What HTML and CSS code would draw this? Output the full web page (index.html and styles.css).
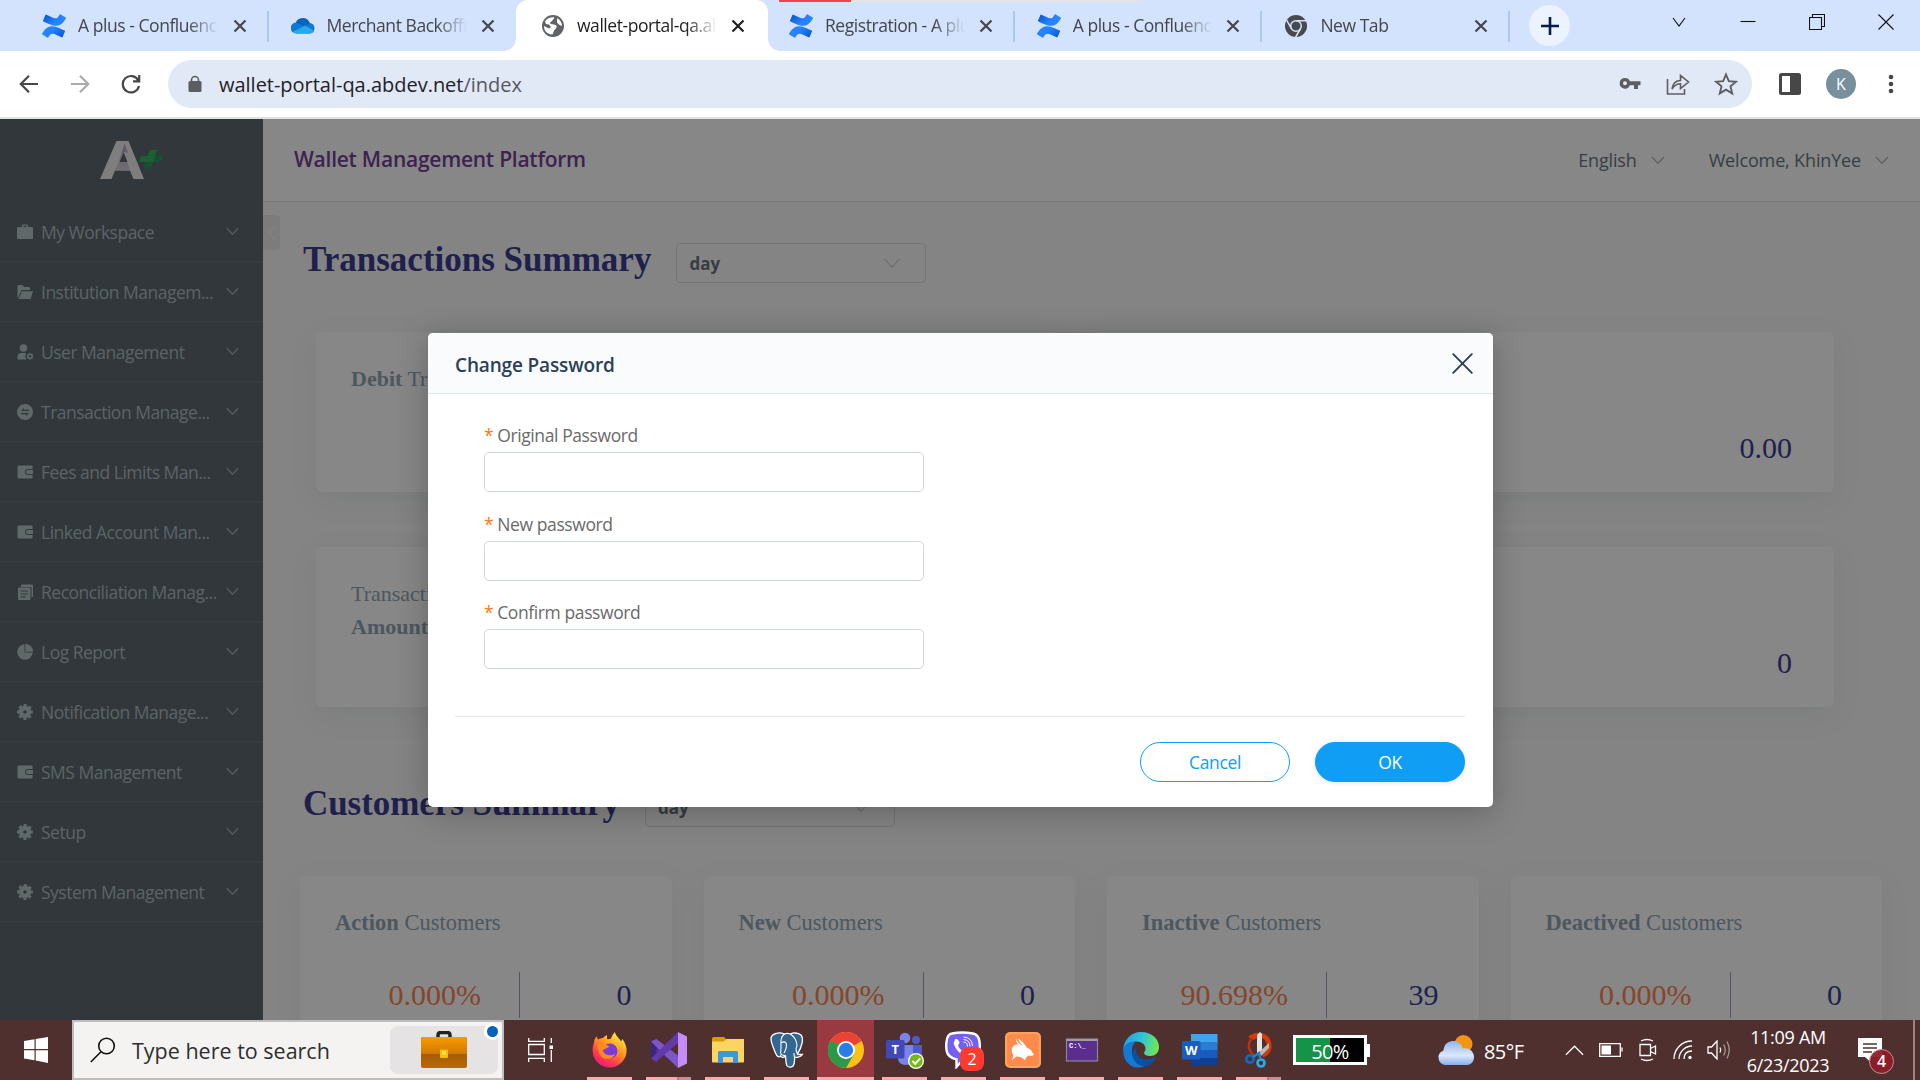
FILE: index.html
```html
<!DOCTYPE html>
<html lang="en">
<head>
<meta charset="utf-8">
<title>Wallet Management Platform</title>
<link rel="stylesheet" href="styles.css">
</head>
<body>
<svg class="defs" width="0" height="0" aria-hidden="true">
  <defs>
    <linearGradient id="cfa" x1="0" y1="0" x2="1" y2=".6"><stop offset="0" stop-color="#0052cc"/><stop offset=".7" stop-color="#2684ff"/></linearGradient>
    <linearGradient id="cfb" x1="1" y1="1" x2="0" y2=".4"><stop offset="0" stop-color="#0052cc"/><stop offset=".7" stop-color="#2684ff"/></linearGradient>
    <linearGradient id="ff" x1=".8" y1="0" x2=".2" y2="1"><stop offset="0" stop-color="#fff44f"/><stop offset=".4" stop-color="#ff9a1e"/><stop offset=".75" stop-color="#ff3750"/><stop offset="1" stop-color="#e31587"/></linearGradient>
    <linearGradient id="edge" x1="0" y1=".3" x2="1" y2=".5"><stop offset="0" stop-color="#249ede"/><stop offset=".5" stop-color="#31c3d6"/><stop offset="1" stop-color="#70e94f"/></linearGradient>
    <linearGradient id="case" x1="0" y1="0" x2="0" y2="1"><stop offset="0" stop-color="#fa9a00"/><stop offset="1" stop-color="#cf7a00"/></linearGradient>
    <linearGradient id="caseb" x1="0" y1="0" x2="0" y2="1"><stop offset="0" stop-color="#8f4a00"/><stop offset="1" stop-color="#b96a08"/></linearGradient>
    <linearGradient id="cloud" x1="0" y1="0" x2="0" y2="1"><stop offset="0" stop-color="#8fb4f0"/><stop offset=".6" stop-color="#dce8fb"/><stop offset="1" stop-color="#88acea"/></linearGradient>
    <linearGradient id="logoA" x1=".6" y1="0" x2=".4" y2="1"><stop offset="0" stop-color="#b3a3bb"/><stop offset="1" stop-color="#d8cfdd"/></linearGradient>
    <symbol id="i-conf" viewBox="0 0 24 24"><path fill="url(#cfb)" d="M.87 18.257c-.248.382-.53.875-.763 1.245a.764.764 0 0 0 .255 1.040l4.965 3.054a.764.764 0 0 0 1.058-.26c.199-.332.454-.763.733-1.221 1.967-3.247 3.945-2.853 7.508-1.146l4.957 2.337a.764.764 0 0 0 1.028-.382l2.364-5.346a.764.764 0 0 0-.382-1 599.851 599.851 0 0 1-4.965-2.361C10.911 10.970 5.224 11.185.87 18.257z"/><path fill="url(#cfa)" d="M23.131 5.743c.249-.405.531-.875.764-1.250a.764.764 0 0 0-.256-1.034L18.675.404a.764.764 0 0 0-1.058.26c-.195.335-.451.763-.734 1.225-1.966 3.246-3.945 2.850-7.508 1.146L4.437.694a.764.764 0 0 0-1.027.382L1.046 6.422a.764.764 0 0 0 .382 1c1.039.49 3.105 1.467 4.965 2.361 6.698 3.246 12.392 3.029 16.738-4.040z"/></symbol>
    <symbol id="i-x" viewBox="0 0 14 14"><path d="M1.500 1.500l11 11M12.500 1.500l-11 11" stroke="currentColor" stroke-width="2.200" fill="none"/></symbol>
    <symbol id="i-down" viewBox="0 0 14 9"><path d="M1 1l6 6.500L13 1" stroke="currentColor" stroke-width="1.200" fill="none"/></symbol>
    <symbol id="i-wallet" viewBox="0 0 16 16"><path d="M1.500 1.500h13q1 0 1 1V5H11a3 3 0 0 0 0 6h4.500v2.500q0 1-1 1h-13q-1 0-1-1v-11q0-1 1-1Z" fill="currentColor"/><path d="M11 5.900h5v4.200h-5a2.100 2.100 0 0 1 0-4.200Z" fill="currentColor"/></symbol>
    <symbol id="i-gear" viewBox="0 0 16 16"><circle cx="8" cy="8" r="4" fill="none" stroke="currentColor" stroke-width="4.400"/><circle cx="8" cy="8" r="6.800" fill="none" stroke="currentColor" stroke-width="2.300" stroke-dasharray="3.140 2.200" stroke-dashoffset="1.570"/></symbol>
  </defs>
</svg>

<header class="tabs">
  <div class="load"><span class="load-done"></span></div>
  <div class="tab first"><svg class="fav"><use href="#i-conf"/></svg><span class="tab-name">A plus - Confluence</span><svg class="tab-x"><use href="#i-x"/></svg></div>
  <div class="tab last"><svg class="fav" viewBox="0 0 24 24"><path d="M5.500 19.500a5.500 5.500 0 0 1-.5-11A7.500 7.500 0 0 1 18.700 9 5.300 5.300 0 0 1 19 19.500Z" fill="#0f78d4"/><path d="M5 8.500A7.500 7.500 0 0 1 18.700 9l-5 3.500Z" fill="#0a63b8"/><path d="M2 17.800 14 11.500l9 5.300a5 5 0 0 1-4 2.700H5.500A5 5 0 0 1 2 17.800Z" fill="#28a8ea"/></svg><span class="tab-name">Merchant Backoffice</span><svg class="tab-x"><use href="#i-x"/></svg></div>
  <div class="tab active"><svg class="fav" viewBox="0 0 24 24"><circle cx="12" cy="12" r="11" fill="#5f6368"/><path d="M4 7.500C6 4 9 3 13 3.200c1 2-2 2-1.500 3.600L9 8.500c-.3 2 3.500 1.500 5.500 2.500 2.500 1.200.5 3.500-.5 4.500-1.500 1.300-1.500 3-2.500 5C6 20.500 3 16.500 3 12l5 2.500 2-1.500-2-2.500-3-.5Z" fill="#fff"/><path d="M16 4.300c3 1.500 5 4.200 5 7.700l-2.500-1L16 8.500Z" fill="#fff"/></svg><span class="tab-name">wallet-portal-qa.abdev</span><svg class="tab-x"><use href="#i-x"/></svg></div>
  <div class="tab"><svg class="fav"><use href="#i-conf"/></svg><span class="tab-name">Registration - A plus</span><svg class="tab-x"><use href="#i-x"/></svg></div>
  <div class="tab"><svg class="fav"><use href="#i-conf"/></svg><span class="tab-name">A plus - Confluence</span><svg class="tab-x"><use href="#i-x"/></svg></div>
  <div class="tab"><svg class="fav" viewBox="0 0 24 24"><circle cx="12" cy="12" r="11" fill="#474a4d"/><circle cx="12" cy="12" r="5.300" fill="none" stroke="#d3e2fd" stroke-width="1.500"/><path d="M12 6.700h10M7.400 14.600 2.600 6.200M16.600 14.600 11.600 23" stroke="#d3e2fd" stroke-width="1.500"/></svg><span class="tab-name">New Tab</span><svg class="tab-x"><use href="#i-x"/></svg></div>
  <div class="plus"><svg width="18" height="18" viewBox="0 0 18 18"><path d="M9 0v18M0 9h18" stroke="#041e49" stroke-width="2.600"/></svg></div>
  <div class="win">
    <svg viewBox="0 0 16 16"><path d="M2 4l6 8 6-8"/></svg>
    <svg viewBox="0 0 16 16"><path d="M.5 7.500h15"/></svg>
    <svg viewBox="0 0 16 16"><path d="M.5 3.500h12v12h-12zM3.500 3.500v-3h12v12h-3"/></svg>
    <svg viewBox="0 0 16 16"><path d="M.5.5l15 15M15.500.5l-15 15"/></svg>
  </div>
</header>

<div class="toolbar">
  <div class="nav">
    <svg viewBox="0 0 20 20"><path d="M19 10H2M10 1.800 1.800 10l8.200 8.200"/></svg>
    <svg class="off" viewBox="0 0 20 20"><path d="M1 10h17M10 1.800l8.200 8.200-8.200 8.200"/></svg>
    <svg viewBox="0 0 20 20"><path d="M17.300 6.500A8.200 8.200 0 1 0 18 12M18.200 1v6.300H12"/></svg>
  </div>
  <div class="omni">
    <svg class="lock" width="14" height="18" viewBox="0 0 14 18"><rect x=".5" y="6" width="13" height="11" rx="1.500" fill="#5a5d61"/><path d="M3.500 7V5a3.500 3.500 0 0 1 7 0v2" fill="none" stroke="#5a5d61" stroke-width="1.600"/></svg>
    <span class="url">wallet-portal-qa.abdev.net<span class="path">/index</span></span>
    <svg class="oi" viewBox="0 0 24 24"><path d="M7 6a5.300 5.300 0 1 0 4.900 7.300H16V17h4v-3.700h2.500V9.200H11.900A5.300 5.300 0 0 0 7 6Zm0 3.300a2 2 0 1 1 0 4 2 2 0 0 1 0-4Z" fill="#5c5e61" fill-rule="evenodd"/></svg>
    <svg class="oi" viewBox="0 0 24 24"><path d="M1.500 7v15h17v-5M6 17c1-6 4-8.500 8.500-8.500v-5L22.500 10l-8 6.500v-4.700C11 11.800 8.500 13 6 17Z" fill="none" stroke="#5c5e61" stroke-width="1.600"/></svg>
    <svg class="oi" viewBox="0 0 24 24"><path d="M12 2.500l2.800 6.600 7.200.6-5.500 4.700 1.700 7-6.200-3.800-6.200 3.800 1.700-7L2 9.700l7.200-.6Z" fill="none" stroke="#5c5e61" stroke-width="1.900"/></svg>
  </div>
  <svg class="panel" width="22" height="22" viewBox="0 0 22 22"><rect width="22" height="22" rx="2.500" fill="#474747"/><rect x="3" y="3" width="8" height="16" fill="#fff"/></svg>
  <span class="avatar">K</span>
  <svg class="dots" width="6" height="20" viewBox="0 0 6 20"><circle cx="3" cy="3" r="2.300"/><circle cx="3" cy="10" r="2.300"/><circle cx="3" cy="17" r="2.300"/></svg>
</div>

<main class="app">
  <aside class="side">
    <div class="logo"><svg width="64" height="40" viewBox="0 0 64 40"><path d="M0 39 16.500 1h12L44 39H33.500L30 30.500H15L11.500 39ZM19 22h8.500l-4-10.500Z" fill="#f0eff0" fill-rule="evenodd"/><path d="M24.500 3.500 28 13l-4-1-4.500 10H27l3 8.500H15L19 21Z" fill="url(#logoA)"/><path d="M50 10h7l-2 6h8l-2.500 6H53l-2 6.500h-7l2-6.500h-7l2-6h7Z" fill="#2c9a62"/><path d="M50 10h7l-2 6-2 6H39l2-6h7Z" fill="#36b85a"/></svg></div>
    <nav class="menu">
      <div class="item"><svg class="mi" viewBox="0 0 16 16"><path d="M5 3V1.500Q5 .5 6 .5h4q1 0 1 1V3h4q1 0 1 1v10q0 1-1 1H1q-1 0-1-1V4q0-1 1-1Zm1.400-1.200V3h3.200V1.800Z" fill="currentColor" fill-rule="evenodd"/></svg><span class="label">My Workspace</span><svg class="md"><use href="#i-down"/></svg></div>
      <div class="item"><svg class="mi" viewBox="0 0 16 16"><path d="M.5 14V2q0-1 1-1h4l1.500 2h5q1 0 1 1v2H4.500L2 12ZM5 7.200h11L13.700 15H1.500Z" fill="currentColor"/></svg><span class="label">Institution Managem...</span><svg class="md"><use href="#i-down"/></svg></div>
      <div class="item"><svg class="mi" viewBox="0 0 16 16"><circle cx="6.500" cy="4" r="3.800" fill="currentColor"/><path d="M.5 15.500V13q0-4 4-4h4.800q-1.800 3 .2 6.500Z" fill="currentColor"/><circle cx="13" cy="12.300" r="2.100" fill="none" stroke="currentColor" stroke-width="1.600"/><path d="M13 8.800v1.500M13 14.300v1.500M10 10.500l1.300.8M14.700 13.300l1.300.7M16 10.500l-1.300.8M11.300 13.300 10 14" stroke="currentColor"/></svg><span class="label">User Management</span><svg class="md"><use href="#i-down"/></svg></div>
      <div class="item"><svg class="mi" viewBox="0 0 16 16"><path d="M8 0a8 8 0 1 0 0 16A8 8 0 0 0 8 0ZM4 6.900 7 4v1.800h5v1.300Zm8 2.200L9 12v-1.800H4V9Z" fill="currentColor" fill-rule="evenodd"/></svg><span class="label">Transaction Manage...</span><svg class="md"><use href="#i-down"/></svg></div>
      <div class="item"><svg class="mi"><use href="#i-wallet"/></svg><span class="label">Fees and Limits Man...</span><svg class="md"><use href="#i-down"/></svg></div>
      <div class="item"><svg class="mi"><use href="#i-wallet"/></svg><span class="label">Linked Account Man...</span><svg class="md"><use href="#i-down"/></svg></div>
      <div class="item"><svg class="mi" viewBox="0 0 16 16"><path d="M5 .5h10q1 0 1 1V13h-1.500V3H4V1.500Q4 .5 5 .5Z" fill="currentColor"/><path d="M2 3.500h10.500q1 0 1 1V15q0 1-1 1H2q-1 0-1-1V4.500q0-1 1-1ZM3.500 6.500v1H11v-1Zm0 3v1H11v-1Zm0 3v1H9v-1Z" fill="currentColor" fill-rule="evenodd"/></svg><span class="label">Reconciliation Manag...</span><svg class="md"><use href="#i-down"/></svg></div>
      <div class="item"><svg class="mi" viewBox="0 0 16 16"><path d="M7.500.2V8.500h8.300A7.800 7.800 0 1 1 7.500.2Z" fill="currentColor"/><path d="M8.300 0A7.500 7.500 0 0 1 16 7.700H8.300Z" fill="currentColor"/></svg><span class="label">Log Report</span><svg class="md"><use href="#i-down"/></svg></div>
      <div class="item"><svg class="mi"><use href="#i-gear"/></svg><span class="label">Notification Manage...</span><svg class="md"><use href="#i-down"/></svg></div>
      <div class="item"><svg class="mi"><use href="#i-wallet"/></svg><span class="label">SMS Management</span><svg class="md"><use href="#i-down"/></svg></div>
      <div class="item"><svg class="mi"><use href="#i-gear"/></svg><span class="label">Setup</span><svg class="md"><use href="#i-down"/></svg></div>
      <div class="item"><svg class="mi"><use href="#i-gear"/></svg><span class="label">System Management</span><svg class="md"><use href="#i-down"/></svg></div>
    </nav>
  </aside>
  <section class="body">
    <div class="top">
      <h1 class="brand">Wallet Management Platform</h1>
      <span class="drop lang">English</span><svg class="td"><use href="#i-down"/></svg>
      <span class="drop user">Welcome, KhinYee</span><svg class="td"><use href="#i-down"/></svg>
    </div>
    <div class="content">
      <div class="fold"><svg width="9" height="15" viewBox="0 0 9 15"><path d="M8 1 1.500 7.500 8 14" fill="none" stroke="#fff" stroke-width="1"/></svg></div>
      <div class="head"><h2>Transactions Summary</h2><div class="select"><b>day</b><svg class="sd"><use href="#i-down"/></svg></div></div>
      <div class="wide">
        <div class="card"><p><b>Debit</b> Transactions</p></div>
        <div class="card"><span class="num">0.00</span></div>
        <div class="card"><p>Transactions<br><b>Amount</b></p></div>
        <div class="card"><span class="num">0</span></div>
      </div>
      <div class="head second"><h2>Customers Summary</h2><div class="select"><b>day</b><svg class="sd"><use href="#i-down"/></svg></div></div>
      <div class="quad">
        <div class="stat"><p><b>Action</b> Customers</p><div class="vals"><span class="pct">0.000%</span><span class="cnt">0</span></div></div>
        <div class="stat"><p><b>New</b> Customers</p><div class="vals"><span class="pct">0.000%</span><span class="cnt">0</span></div></div>
        <div class="stat"><p><b>Inactive</b> Customers</p><div class="vals"><span class="pct">90.698%</span><span class="cnt">39</span></div></div>
        <div class="stat"><p><b>Deactived</b> Customers</p><div class="vals"><span class="pct">0.000%</span><span class="cnt">0</span></div></div>
      </div>
    </div>
  </section>
  <div class="mask">
    <form class="modal">
      <div class="m-head"><span class="m-title">Change Password</span><svg width="21" height="21" viewBox="0 0 21 21"><path d="M1.200 1.200l18.600 18.600M19.800 1.200 1.200 19.800" stroke="#2b4058" stroke-width="1.900" stroke-linecap="round"/></svg></div>
      <div class="m-body">
        <label><span class="lb"><i>*</i>Original Password</span><input type="password"></label>
        <label><span class="lb"><i>*</i>New password</span><input type="password"></label>
        <label><span class="lb"><i>*</i>Confirm password</span><input type="password"></label>
      </div>
      <div class="m-foot"><button type="button" class="btn">Cancel</button><button type="button" class="btn ok">OK</button></div>
    </form>
  </div>
</main>

<footer class="bar">
  <div class="start"><svg width="24" height="26" viewBox="0 0 24 26"><path d="M0 4l10.500-1.800V12H0ZM11.700 2 24 0v12H11.700ZM0 13.200h10.500v10L0 21.500ZM11.700 13.200H24V26l-12.300-2.400Z" fill="#fff"/></svg></div>
  <div class="search">
    <svg width="26" height="26" viewBox="0 0 26 26"><circle cx="16.500" cy="9" r="7.800" fill="none" stroke="#111" stroke-width="1.600"/><path d="M11 14.800.800 25" stroke="#111" stroke-width="1.600"/></svg>
    <span class="hint">Type here to search</span>
    <div class="promo"><svg width="46" height="38" viewBox="0 0 46 38"><path d="M17 7V4q0-2.500 2.500-2.500h7Q29 1.500 29 4v3" fill="none" stroke="#222" stroke-width="3.500"/><rect y="6" width="46" height="31" rx="2" fill="url(#caseb)"/><path d="M0 23V8q0-2 2-2h42q2 0 2 2v15Z" fill="url(#case)"/><rect x="19" y="18.500" width="8" height="8.500" rx="1" fill="#f2c200"/><rect x="21" y="20" width="4" height="3.500" fill="#ffe45c"/></svg><i class="dot"></i></div>
  </div>
  <div class="view"><svg width="25" height="24" viewBox="0 0 25 24"><path d="M.7 0v3.300h15.600V0M.7 6.500h15.600v10H.7zM.7 24v-3.700h15.600V24M23.300 0v5M23.300 12v12" fill="none" stroke="#fff" stroke-width="1.300"/><rect x="21.500" y="7.500" width="3.500" height="3.500" fill="#fff"/></svg></div>
  <div class="apps">
    <div class="ap"><svg viewBox="0 0 36 36"><path d="M2 11c0-3 1-5 2.500-6.500L6 7.500q2-1.500 5-1.500c1-1.500 3-2.500 4-3L15 7q2 .5 4-.5c1-3 2.500-5 4-6.500.5 4 4 5.500 6 9.500L30.500 7c3 4.500 4.500 8 4 13.500A17 17 0 0 1 .7 20C.4 16 1 13.500 2 11Z" fill="url(#ff)"/><circle cx="18" cy="19" r="7.500" fill="#7b3bd6"/><path d="M5 12c4-1 8-.5 12 2.500-1 2-5 2-6 4 1 5 8 6 12 3.500-2 6-12 7-15.500.5Z" fill="#ff8a1c"/></svg></div>
    <div class="ap dual"><svg viewBox="0 0 36 36"><path d="M0 9.500 5.500 7 27 32l0 4L9 20 5.500 31 0 26Z" fill="#52349a"/><path d="M0 9.500v17l5.500-4.700v-7.600Z" fill="#3d2680"/><path d="M5.500 7 27 23.500V36L0 9.500Z" fill="#7f56c8"/><path d="M27 0v11L5.500 29.500 0 26.500Z" fill="#643aa8"/><path d="M27 0l9 4.500v27L27 36Z" fill="#c48df5"/></svg></div>
    <div class="ap"><svg viewBox="0 0 36 36"><path d="M2 6.500Q2 5 3.500 5H14l3 3v3H2Z" fill="#d79a0b"/><path d="M2 9.500h11.500l3-2.500H34v22.500q0 1-1 1H3q-1 0-1-1Z" fill="#fcd462"/><path d="M8 31V20.500q0-1.500 1.500-1.500h17q1.500 0 1.500 1.500V31h-5v-6h-10v6Z" fill="#3a96dd"/></svg></div>
    <div class="ap"><svg viewBox="0 0 36 36"><path d="M7 1.500c3-1.200 6-.5 8.500.5 2-1 4-.8 6 0C24 .5 29 .5 32 3c3 3.500 1 11.500-3.500 19 1.500 1 3.500.3 5 .3-1.500 2.700-5 3.300-8 3 .2 3 .3 6.500-1.500 8.700-1.500 1.500-5 1.500-6.200-.5C16.500 30 17 27 16.500 24c-2 2-4 1.500-5 0-1 1.500-3.500 1-5-3C3.500 14 1.500 9 2 6c.7-2.700 2.500-4 5-4.500Z" fill="#336791" stroke="#fff" stroke-width="1.300"/><path d="M15.500 2c-4 3-4 7-3.500 11 .3 3-.5 6-.3 8 0 1 1 2.500 4.500 2.500M21.500 2c4 3 6.500 8 6.500 12-1.500 2-1 5 .5 8M12 11c2-1.500 4-1.500 5 0s.5 6-2 10M25.500 25c-.5-1.500-.7-2.500-.5-4" fill="none" stroke="#fff" stroke-width="1.100"/></svg></div>
    <div class="ap now"><svg viewBox="0 0 36 36"><circle cx="18" cy="18" r="18" fill="#fbc116"/><path d="M18 18 2.400 9A18 18 0 0 1 33.600 9Z" fill="#ea4335"/><path d="M2.400 9A18 18 0 0 0 18 36l7.800-13.500L18 18Z" fill="#2a9a48"/><path d="M2.400 9l7.900 13.500L14 12Z" fill="#2a9a48"/><path d="M2.400 9 10 12h8V9l4-8L10 2Z" fill="#ea4335"/><circle cx="18" cy="18" r="9" fill="#fff"/><circle cx="18" cy="18" r="7.200" fill="#2a7de8"/></svg></div>
    <div class="ap"><svg class="teams" viewBox="0 0 38 38"><circle cx="19" cy="7" r="5.300" fill="#7b83eb"/><circle cx="30" cy="9" r="4" fill="#5059c9"/><path d="M24 14h12v11q0 5-6 6h-6Z" fill="#5059c9"/><path d="M13 14h14v13q0 7-7 7-8 0-8-7Z" fill="#7b83eb"/><rect y="9" width="18.500" height="18.500" rx="1.500" fill="#4149b4"/><text x="9.300" y="22.500" text-anchor="middle" class="glyph">T</text><circle cx="30" cy="30" r="8" fill="#fff"/><circle cx="30" cy="30" r="6.700" fill="#77b916"/><path d="M26.500 30l2.700 2.800 5-5.500" fill="none" stroke="#fff" stroke-width="2"/></svg></div>
    <div class="ap"><svg class="viber" viewBox="0 0 38 38"><path d="M7 2.500Q17 .5 28 2.500c4.500 1 6 4 6.500 8q.7 6 0 11c-1 5.500-5 7-12 7.500l-5 .3-6 6.500v-7.500C5.500 27 2.500 24.500 1.700 20q-1-5.500 0-10.500C2.300 5.500 4 3 7 2.500Z" fill="#7360f2" stroke="#fff" stroke-width="2.400"/><path d="M10 8.500c2-1.500 4 1 4.500 3 0 1.500-2 2-1 4 1 2.500 3 4 5 4.500 1.500 0 1.500-2 3-1.500 2 .7 4 2.500 3 4-2 3-5 2.500-8 .5-4-2.500-7-7-7.800-11Z" fill="#fff"/><path d="M18.500 11q4 0 4 4.500M18.500 8.500q6.500.5 6.500 7M18.500 6Q27 6.500 27.500 15" fill="none" stroke="#fff"/></svg><span class="vb">2</span></div>
    <div class="ap"><svg viewBox="0 0 36 36"><rect width="36" height="36" rx="5" fill="#f9a35c"/><rect x="2" y="2" width="32" height="32" rx="4" fill="#ff8a4c"/><path d="M11 6c.5 3.500 3.500 6 7 8C15 10.500 13.500 8.500 13 6.500c4 2.500 7 5.500 9 9.500 2.500.5 4.500 2 5 4l2 2.500c-1 1.500-3.500 1.500-5 1-2 .8-3.500 2.500-4 5-2-2.500-5-4-8.500-4l-4.500 3.500c1-2.500 1.500-4 1-5.500C6 19 6.500 15.500 9 13.500c1.500-1.200 3-1.300 4.500-.8C11.500 10.500 10.500 8.500 11 6Z" fill="#fff"/></svg></div>
    <div class="ap"><svg viewBox="0 0 36 36"><rect x="2.500" y="7" width="31" height="22" fill="#5b2d90" stroke="#8c8790" stroke-width="1.200"/><path d="M2.500 7h31v2h-31Z" fill="#a09aa6"/><text x="5" y="16" class="cmd">C:\_</text></svg></div>
    <div class="ap"><svg viewBox="0 0 36 36"><path d="M.2 19C0 8 8 0 18 0c11 0 18 7 18 15 0 6-4 9-9 9-4 0-6-1.500-6-3 0-1.200 1.500-1.500 1.500-4.500 0-4-4-7-9-7-7 0-12 4-13.300 9.500Z" fill="url(#edge)"/><path d="M.2 19C1 12 7 9 13 9.500c-4 3-4 7-4 10 0 8 6 14 13 14.500C10 39 .5 31 .2 19Z" fill="#1279d4"/><path d="M13.500 15C11 23 18 29 27 27q3-.6 5.500-2c.8-.3 1 .3.500 1-3 5-7 8-11 8.500C10 33 6 21 13.500 15Z" fill="#0b4fa0"/></svg></div>
    <div class="ap"><svg viewBox="0 0 36 36"><path d="M9 2h26.500v9H9Z" fill="#41a5ee"/><path d="M9 10h26.500v8H9Z" fill="#2b7cd3"/><path d="M9 18h26.500v8H9Z" fill="#185abd"/><path d="M9 26h26.500v8H9Z" fill="#103f91"/><rect x="0" y="9" width="18.500" height="18.500" rx="1.500" fill="#1a5dbe"/><text x="9.200" y="23" text-anchor="middle" class="glyph">W</text></svg></div>
    <div class="ap dual"><svg viewBox="0 0 36 36"><path d="M7 5C12-1 27-2 30 10c2 9-3 14-8 15l-2-4c5-1 7-7 5-11C23 5 17 4 13 8Z" fill="#d83b01"/><path d="M10 7c-4 6-2 12 3 17" fill="none" stroke="#b8330a" stroke-width="2.500"/><path d="M16 3l3-3 2 2v21h-5Z" fill="#e3e3e3"/><path d="M18 20l10-9v5l-8 8Z" fill="#b9b9b9"/><circle cx="9" cy="27" r="3.700" fill="none" stroke="#0f6cbd" stroke-width="2.700"/><circle cx="20" cy="31" r="3.500" fill="none" stroke="#28a8ea" stroke-width="2.700"/><path d="M12 25l6-4 1.500 6" fill="none" stroke="#1b83d0" stroke-width="2.500"/></svg></div>
  </div>
  <div class="charge"><span>50%</span></div>
  <div class="weather"><svg width="38" height="32" viewBox="0 0 38 32"><circle cx="26.500" cy="10" r="9" fill="#f39412"/><path d="M8 31a7.500 7.500 0 0 1-1.500-14.500C7 10 11.500 6.500 17 7s8 4 8.500 7.500C32 13 37 17.500 37 23s-3.500 8-8 8Z" fill="url(#cloud)"/></svg><span>85°F</span></div>
  <div class="tray">
    <svg class="t1" viewBox="0 0 20 12"><path d="M1 11l9-9 9 9"/></svg>
    <svg class="t2" viewBox="0 0 24 16"><path d="M.7 1.700h20.600v12.600H.7zM23 5.500v4"/><rect x="2.500" y="3.500" width="9.500" height="9" fill="#fff" stroke="none"/></svg>
    <svg class="t3" viewBox="0 0 18 24"><path d="M1 6.500h10.500v11H1zM11.500 10.500 16.500 8v8l-5-2.500M2 3q6-3 12 0M2 21q6 3 12 0"/></svg>
    <svg class="t4" viewBox="0 0 20 20"><path d="M1 19C1 9 9 1 19 1M6 19C6 12 12 6 19 6M11 19c0-5 3-8 8-8"/><circle cx="17" cy="17.500" r="1.700" fill="#fff" stroke="none"/></svg>
    <svg class="t5" viewBox="0 0 24 20"><path d="M1 7h3.500L10 1v18l-5.500-6H1Z"/><path d="M13 7.500q1.500 2.500 0 5"/><path d="M16.500 4.500q3.500 5.500 0 11M20 1.500q4.500 8.500 0 17" opacity=".5"/></svg>
  </div>
  <div class="clock"><span>11:09 AM</span><span>6/23/2023</span></div>
  <div class="note"><svg width="24" height="25" viewBox="0 0 24 25"><path d="M0 0h24v19H13v5.500L7 19H0Z" fill="#fff"/><path d="M5 6h14M5 10h14M5 14h9" stroke="#4f302f" stroke-width="1.300"/></svg><span class="nb">4</span></div>
</footer>
</body>
</html>
```
FILE: styles.css
```css
* { box-sizing: border-box; }
body { margin: 0; width: 1920px; height: 1080px; overflow: hidden; display: flex; flex-direction: column; font-family: "Open Sans", "Noto Sans", sans-serif; background: #fff; }
h1, h2, p { margin: 0; }
svg { flex: none; display: block; }
.defs { position: absolute; }

.tabs { position: relative; height: 51px; flex: none; display: flex; padding-left: 19px; background: #d3e2fd; }
.load { position: absolute; left: 779px; top: 0; width: 362px; height: 2px; background: #e3e3e6; }
.load-done { display: block; width: 72px; height: 2px; background: #e8474f; }
.tab { flex: none; width: 247.700px; height: 51px; display: flex; align-items: center; padding: 0 21px 0 23px; position: relative; color: #44474a; }
.tab:not(.last):not(.active)::after { content: ""; position: absolute; right: -1px; top: 11px; width: 2px; height: 31px; background: #a8c7fa; }
.tab.first, .tab.last { width: 248.500px; }
.tab.active { width: 252px; margin-right: -2px; padding: 0 23px 0 25px; background: #fff; border-radius: 12px 12px 0 0; color: #1f1f1f; }
.tab.active::before, .tab.active::after { content: ""; position: absolute; bottom: 0; width: 12px; height: 12px; }
.tab.active::before { left: -12px; background: radial-gradient(circle at 0 0, transparent 11.500px, #fff 12px); }
.tab.active::after { right: -12px; background: radial-gradient(circle at 100% 0, transparent 11.500px, #fff 12px); }
.fav { width: 24px; height: 24px; }
.tab-name { flex: 1; margin: -2px 14px 0 12px; overflow: hidden; white-space: nowrap; font-size: 17.500px; letter-spacing: -.45px; line-height: 26px; -webkit-mask-image: linear-gradient(90deg, #000 78%, transparent 100%); mask-image: linear-gradient(90deg, #000 78%, transparent 100%); }
.tab-x { width: 14px; height: 14px; }
.plus { flex: none; margin: 5px 0 0 20px; width: 41px; height: 41px; border-radius: 50%; background: #ecf2fe; display: grid; place-items: center; }
.win { display: flex; margin: 14px 0 0 101px; gap: 53px; }
.win svg { width: 16px; height: 16px; fill: none; stroke: #111; stroke-width: 1.100; }

.toolbar { height: 68px; flex: none; display: flex; align-items: center; border-bottom: 2px solid #dfe2e0; }
.nav { width: 168px; display: flex; gap: 31px; padding-left: 19px; }
.nav svg { width: 20px; height: 20px; fill: none; stroke: #474747; stroke-width: 2.200; }
.nav .off { stroke: #aaa; }
.omni { width: 1584px; height: 48px; border-radius: 24px; background: #e1e8f6; display: flex; align-items: center; padding: 0 14px 0 20px; }
.url { flex: 1; margin-left: 17px; font-size: 20px; letter-spacing: -.02px; color: #1f2226; }
.path { color: #55585d; }
.oi { width: 24px; height: 24px; margin-left: 24px; }
.panel { margin-left: 27px; }
.avatar { width: 30px; height: 30px; margin-left: 25px; border-radius: 50%; background: #78909c; color: #fff; font-size: 16px; line-height: 30px; text-align: center; }
.dots { margin-left: 32px; fill: #474747; }

.app { position: relative; flex: 1; min-height: 0; display: flex; overflow: hidden; }
.side { width: 263px; background: #5e686f; flex: none; }
.logo { height: 83px; padding: 21px 0 0 100px; }
.item { height: 60px; display: flex; align-items: center; padding: 0 24px 0 17px; border-bottom: 1px solid #6b747b; color: #aebcc2; }
.mi { width: 16px; height: 16px; color: #b6c4c8; }
.label { flex: 1; margin-left: 8px; font-size: 17.500px; letter-spacing: -.5px; white-space: nowrap; }
.md { width: 13px; height: 9px; margin-top: -1px; }
.body { flex: 1; min-width: 0; background: #f9f9f9; }
.top { height: 83px; display: flex; align-items: center; padding: 0 31px; background: #fff; border-bottom: 1px solid #e0e0e0; }
.brand { flex: 1; font-size: 21px; font-weight: 600; letter-spacing: -.25px; line-height: 28px; margin-top: -2px; color: #754297; white-space: nowrap; }
.drop { font-size: 18px; letter-spacing: -.15px; margin-top: -1px; color: #6c7780; white-space: nowrap; }
.user { margin-left: 44px; }
.td { width: 14px; height: 9px; margin-left: 14px; color: #aeb8c0; }
.content { position: relative; padding: 0 38px 0 40px; }
.fold { position: absolute; left: 0; top: 13px; width: 17px; height: 35px; border-radius: 0 4px 4px 0; background: #ebebeb; display: grid; place-items: center; }
.head { display: flex; align-items: center; padding-top: 41px; height: 81px; gap: 25px; }
.head h2 { font: bold 35px/40px "Liberation Serif", serif; color: #3e3e93; white-space: nowrap; margin-top: -7px; }
.second { padding-top: 0; height: 40px; margin-top: 80px; }
.second h2 { letter-spacing: -.06px; }
.select { width: 250px; height: 40px; border: 1px solid #d9dde0; border-radius: 4px; padding: 0 24px 0 12px; display: flex; align-items: center; justify-content: space-between; font-size: 17px; color: #6a737b; }
.sd { width: 18px; height: 11px; color: #d0d6db; }
.wide { display: grid; grid-template-columns: 743px 743px; grid-template-rows: 160px 160px; gap: 55px 32px; margin: 49px 0 0 13px; }
.card, .stat { background: #fff; border-radius: 6px; box-shadow: 0 8px 30px rgba(40, 90, 70, .08); color: #93a4b3; font: 22px/33px "Liberation Serif", serif; }
.card { padding: 30px 42px 0 35px; display: flex; }
.num { margin: 69px 0 0 auto; font-size: 30px; line-height: 34px; color: #3e3e93; }
.quad { display: grid; grid-template-columns: repeat(4, 371.500px); gap: 32px; margin: 49px 0 0 -3px; }
.stat { height: 220px; padding: 30px 40px 0 35px; white-space: nowrap; font-size: 22.500px; }
.vals { display: flex; margin-top: 33px; height: 46px; font-size: 30px; line-height: 46px; }
.pct { width: 185px; padding-right: 38px; border-right: 1px solid #93a9c0; text-align: right; color: #ff8450; }
.cnt { flex: 1; text-align: right; color: #3e3e93; }
.mask { position: absolute; inset: 0; background: rgba(0, 0, 0, .47); padding: 214px 0 0 428px; }

.modal { width: 1065px; height: 474px; background: #fff; border-radius: 5px; box-shadow: 0 5px 32px rgba(0, 0, 0, .25); overflow: hidden; }
.m-head { height: 61px; display: flex; align-items: center; justify-content: space-between; padding: 0 20px 0 27px; background: #f9fbfc; border-bottom: 1px solid #e1e6e9; }
.m-title { font-size: 19px; font-weight: 600; letter-spacing: -.15px; line-height: 26px; padding-top: 3px; color: #2b4058; }
.m-body { padding: 27px 0 0 56px; }
.m-body label { display: block; height: 88.500px; }
.lb { display: block; height: 31px; font-size: 17.500px; line-height: 29px; letter-spacing: -.4px; color: #6a6a6a; }
.lb i { font-style: normal; color: #f47b14; margin-right: 4px; }
.m-body input { display: block; width: 440px; height: 40px; border: 1px solid #d0d8d8; border-radius: 5px; background: #fff; padding: 0; }
.m-foot { margin: 29px 28px 0 27px; padding-top: 25px; border-top: 1px solid #e6e6e6; display: flex; justify-content: flex-end; gap: 25px; }
.btn { width: 150px; height: 40px; border: 1px solid #109df6; border-radius: 20px; background: #fff; color: #109df6; font: 17.500px "Open Sans", sans-serif; letter-spacing: -.35px; padding: 0; }
.ok { background: #109df6; color: #fff; box-shadow: 0 1px 5px rgba(0, 0, 0, .12); }

.bar { height: 60px; flex: none; display: flex; align-items: center; background: #4f302f; color: #fff; position: relative; }
.bar::after { content: ""; position: absolute; right: 5px; top: 0; width: 2px; height: 60px; background: #9a8584; }
.start { width: 72px; padding-left: 24px; }
.search { width: 432px; height: 60px; display: flex; align-items: center; padding: 0 4px 0 16px; background: #f4f3f2; border: 2px solid #bfbebe; }
.hint { flex: 1; margin-left: 16px; font-size: 21.500px; letter-spacing: 0; line-height: 28px; padding-top: 2px; color: #2e2e2e; white-space: nowrap; }
.promo { position: relative; width: 108px; height: 48px; border-radius: 8px; background: #e5e3e4; display: grid; place-items: center; }
.dot { position: absolute; right: -3px; top: -3px; width: 17px; height: 17px; border: 3px solid #fff; border-radius: 50%; background: #0063bd; }
.view { width: 76px; padding-left: 24px; }
.apps { display: flex; }
.ap { width: 59px; height: 60px; display: flex; justify-content: center; align-items: center; position: relative; }
.ap svg { width: 36px; height: 36px; }
.ap .teams, .ap .viber { width: 38px; height: 38px; }
.ap::after { content: ""; position: absolute; left: 7px; bottom: 0; width: 45px; height: 3px; background: #ffa9ae; }
.dual::after { background: linear-gradient(90deg, #ffa9ae 31px, #b87d80 31px, #b87d80 33px, #cf8a8e 33px); }
.now { background: linear-gradient(#993a41, #993a41) 1px 0 / 57px 100% no-repeat; }
.now::after { left: 1px; width: 57px; }
.glyph { font: bold 13px "Open Sans", sans-serif; fill: #fff; }
.cmd { font: bold 7px "Liberation Mono", monospace; fill: #fff; }
.vb { position: absolute; left: 26px; top: 27px; width: 24px; height: 24px; border-radius: 8px; background: #ff3b30; font-size: 16px; line-height: 24px; text-align: center; }
.charge { position: relative; width: 74px; height: 30px; margin-left: 5px; border: 3px solid #fff; background: linear-gradient(90deg, #159447 50%, #000 50%); display: flex; align-items: center; justify-content: center; font-size: 20px; letter-spacing: -.7px; }
.charge span { margin-top: 2px; }
.charge::after { content: ""; position: absolute; right: -6px; top: 6px; width: 3px; height: 13px; background: #fff; }
.weather { display: flex; align-items: center; gap: 9px; margin-left: 70px; width: 128px; font-size: 20px; letter-spacing: -.6px; }
.weather span { padding-top: 2px; }
.tray { display: flex; align-items: center; }
.tray svg { fill: none; stroke: #fff; stroke-width: 1.300; }
.t1 { width: 19px; height: 12px; }
.t2 { width: 24px; height: 16px; margin-left: 15px; }
.t3 { width: 18px; height: 24px; margin-left: 16px; }
.t4 { width: 20px; height: 20px; margin-left: 16px; }
.t5 { width: 24px; height: 20px; margin-left: 14px; }
.clock { width: 100px; margin-left: 7px; padding-top: 1px; display: flex; flex-direction: column; align-items: center; font-size: 18px; line-height: 28px; letter-spacing: -.3px; }
.note { position: relative; margin-left: 20px; }
.nb { position: absolute; left: 11px; top: 11px; width: 25px; height: 25px; border: 1px solid #c98b90; border-radius: 50%; background: rgba(140, 30, 42, .95); font-size: 16px; font-weight: 600; line-height: 23px; text-align: center; }
```
